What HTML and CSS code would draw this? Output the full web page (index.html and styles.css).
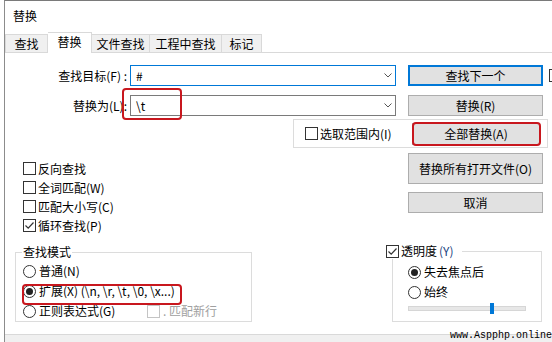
FILE: index.html
```html
<!DOCTYPE html>
<html lang="zh-CN">

<head>
  <meta charset="UTF-8">
  <title>替换</title>
  <link rel="stylesheet" href="styles.css">
</head>

<body>
  <div class="window">
    <div class="titlebar">替换</div>

    <div class="tabs">
      <div class="tab first">查找</div>
      <div class="tab active">替换</div>
      <div class="tab w58">文件查找</div>
      <div class="tab w72">工程中查找</div>
      <div class="tab w40">标记</div>
    </div>

    <div class="panel">
      <div class="field-row">
        <label class="field-label">查找目标(F) :</label>
        <div class="combo focused">
          <span>#</span>
          <svg width="8" height="5" viewBox="0 0 8 5"><path d="M0.5 0.5L4 4L7.5 0.5" fill="none" stroke="#555" /></svg>
        </div>
        <button class="btn default">查找下一个</button>
        <span class="box cut"></span>
      </div>

      <div class="field-row second">
        <label class="field-label">替换为(L):</label>
        <div class="combo">
          <span>\t</span>
          <svg width="8" height="5" viewBox="0 0 8 5"><path d="M0.5 0.5L4 4L7.5 0.5" fill="none" stroke="#555" /></svg>
        </div>
        <button class="btn">替换(R)</button>
      </div>

      <div class="selection">
        <label class="option"><span class="box"></span>选取范围内(I)</label>
        <button class="btn replace-all">全部替换(A)</button>
      </div>

      <div class="middle">
        <div class="options">
          <label class="option"><span class="box"></span>反向查找</label>
          <label class="option"><span class="box"></span>全词匹配(W)</label>
          <label class="option"><span class="box"></span>匹配大小写(C)</label>
          <label class="option"><span class="box"><svg width="11" height="11" viewBox="0 0 11 11"><path d="M1.5 5.5L4.2 8.2L9.5 2.5" fill="none" stroke="#333" stroke-width="1.2" /></svg></span>循环查找(P)</label>
        </div>
        <div class="actions">
          <button class="btn tall">替换所有打开文件(O)</button>
          <button class="btn">取消</button>
        </div>
      </div>

      <div class="bottom">
        <fieldset class="mode">
          <legend>查找模式</legend>
          <div class="radios">
            <label class="option radio-row"><span class="radio"></span>普通(N)</label>
            <label class="option radio-row"><span class="radio on"></span>扩展(X) (\n, \r, \t, \0, \x...)</label>
            <div class="regex-row">
              <label class="option radio-row regex"><span class="radio"></span>正则表达式(G)</label>
              <label class="option disabled"><span class="box"></span>. 匹配新行</label>
            </div>
          </div>
        </fieldset>

        <div class="opacity">
          <div class="opacity-head">
            <label class="option"><span class="box"><svg width="11" height="11" viewBox="0 0 11 11"><path d="M1.5 5.5L4.2 8.2L9.5 2.5" fill="none" stroke="#333" stroke-width="1.2" /></svg></span>透明度<span class="accel">(Y)</span></label>
            <span class="rule"></span>
          </div>
          <div class="opacity-body">
            <label class="option radio-row"><span class="radio on"></span>失去焦点后</label>
            <label class="option radio-row"><span class="radio"></span>始终</label>
            <div class="slider"><span class="thumb"></span></div>
          </div>
        </div>
      </div>
    </div>

    <div class="statusbar"></div>

    <span class="mark mark-replace"></span>
    <span class="mark mark-all"></span>
    <span class="mark mark-mode"></span>
    <span class="watermark">www.Aspphp.online</span>
  </div>
</body>

</html>
```

FILE: styles.css
```css
* {
  box-sizing: border-box;
}

body {
  margin: 0;
  background: #fff;
  color: #000;
  font: 12px/16px "Noto Sans CJK SC", "Noto Sans", sans-serif;
  overflow: hidden;
}

.window {
  border-left: 1px solid #8c8c8c;
  border-top: 1px solid #7a7a7a;
  height: 342px;
  margin-left: 4px;
  overflow: hidden;
  position: relative;
}

.titlebar {
  height: 31px;
  line-height: 30px;
  padding-left: 8px;
}

.tabs {
  align-items: flex-end;
  border-bottom: 1px solid #d9d9d9;
  display: flex;
  height: 21px;

  .tab {
    background: #f0f0f0;
    border: 1px solid #d9d9d9;
    border-bottom: none;
    border-left: none;
    height: 18px;
    line-height: 17px;
    text-align: center;
    width: 43px;

    &.first {
      border-left: 1px solid #d9d9d9;
    }

    &.active {
      background: #fff;
      height: 21px;
      margin-bottom: -1px;
      width: 44px;
    }

    &.w58 {
      width: 58px;
    }

    &.w72 {
      width: 72px;
    }

    &.w40 {
      width: 40px;
    }
  }
}

.panel {
  border-bottom: 1px solid #d9d9d9;
  height: 282px;
  padding-top: 12px;
}

.btn {
  background: #e1e1e1;
  border: 1px solid #adadad;
  color: #000;
  font: inherit;
  height: 21px;
  padding: 0;
  width: 135px;

  &.default {
    border: 2px solid #0078d7;
  }

  &.tall {
    height: 31px;
  }
}

.box {
  align-items: center;
  background: #fff;
  border: 1px solid #333;
  display: flex;
  flex: none;
  height: 13px;
  justify-content: center;
  width: 13px;
}

.radio {
  align-items: center;
  background: #fff;
  border: 1px solid #333;
  border-radius: 50%;
  display: flex;
  flex: none;
  height: 13px;
  justify-content: center;
  width: 13px;

  &.on::after {
    background: #222;
    border-radius: 50%;
    content: "";
    height: 7px;
    width: 7px;
  }
}

.option {
  align-items: center;
  display: flex;
  gap: 2px;
  height: 19px;
  white-space: nowrap;

  &.radio-row {
    gap: 3px;
    height: 20px;
  }

  &.disabled {
    color: #a0a0a0;
    gap: 3px;
    height: 20px;

    .box {
      border-color: #c4c4c4;
    }
  }
}

.field-row {
  align-items: center;
  display: flex;
  height: 21px;

  &.second {
    margin-top: 9px;
  }

  .field-label {
    flex: none;
    padding-right: 3px;
    text-align: right;
    width: 125px;
  }

  .combo {
    align-items: center;
    border: 1px solid #7a7a7a;
    display: flex;
    flex: none;
    height: 21px;
    justify-content: space-between;
    padding: 0 3px 0 5px;
    width: 266px;

    &.focused {
      border-color: #0078d7;
    }
  }

  .btn {
    flex: none;
    margin-left: 12px;
  }

  .cut {
    margin-left: 6px;
  }
}

.selection {
  align-items: center;
  border: 1px solid #dcdcdc;
  display: flex;
  height: 29px;
  margin: 3px 0 0 288px;
  padding: 0 7px 0 11px;
  width: 255px;

  .replace-all {
    height: 22px;
    margin-left: auto;
    width: 128px;
  }
}

.middle {
  display: flex;
  height: 95px;

  .options {
    flex: 1;
    padding: 11px 0 0 18px;
  }

  .actions {
    display: flex;
    flex-direction: column;
    gap: 8px;
    margin-right: 9px;
    padding-top: 5px;
    width: 135px;
  }
}

.bottom {
  align-items: flex-start;
  display: flex;
  padding-left: 10px;
}

.mode {
  border: 1px solid #dcdcdc;
  height: 78px;
  margin: 1px 0 0;
  min-width: 0;
  padding: 0 0 0 7px;
  width: 237px;

  legend {
    line-height: 16px;
    margin-left: -1px;
    padding: 0 1px;
  }

  .radios {
    padding-top: 1px;
  }

  .regex-row {
    display: flex;
  }

  .regex {
    width: 124px;
  }
}

.opacity {
  margin-left: 134px;
  width: 156px;

  .opacity-head {
    display: flex;
    height: 16px;

    .option {
      height: 16px;
    }

    .accel {
      color: #203f80;
    }

    .rule {
      border-right: 1px solid #dcdcdc;
      border-top: 1px solid #dcdcdc;
      flex: 1;
      margin: 8px 0 0 8px;
    }
  }

  .opacity-body {
    border: 1px solid #dcdcdc;
    border-top: none;
    height: 63px;
    margin-left: 6px;
    padding: 3px 0 0 15px;
  }

  .slider {
    background: #e7e7e7;
    border: 1px solid #d6d6d6;
    height: 5px;
    margin-top: 4px;
    position: relative;
    width: 118px;

    .thumb {
      background: #0078d7;
      height: 11px;
      left: 81px;
      position: absolute;
      top: -4px;
      width: 4px;
    }
  }
}

.statusbar {
  background: #f0f0f0;
  height: 8px;
}

.mark {
  border: 2px solid #c8171e;
  border-radius: 4px;
  position: absolute;

  &.mark-replace {
    height: 32px;
    left: 117px;
    top: 87px;
    width: 60px;
  }

  &.mark-all {
    height: 24px;
    left: 407px;
    top: 121px;
    width: 129px;
  }

  &.mark-mode {
    height: 21px;
    left: 17px;
    top: 283px;
    width: 160px;
  }
}

.watermark {
  bottom: 1px;
  font: 10px/11px "Liberation Mono", monospace;
  position: absolute;
  right: 0;
}
```
